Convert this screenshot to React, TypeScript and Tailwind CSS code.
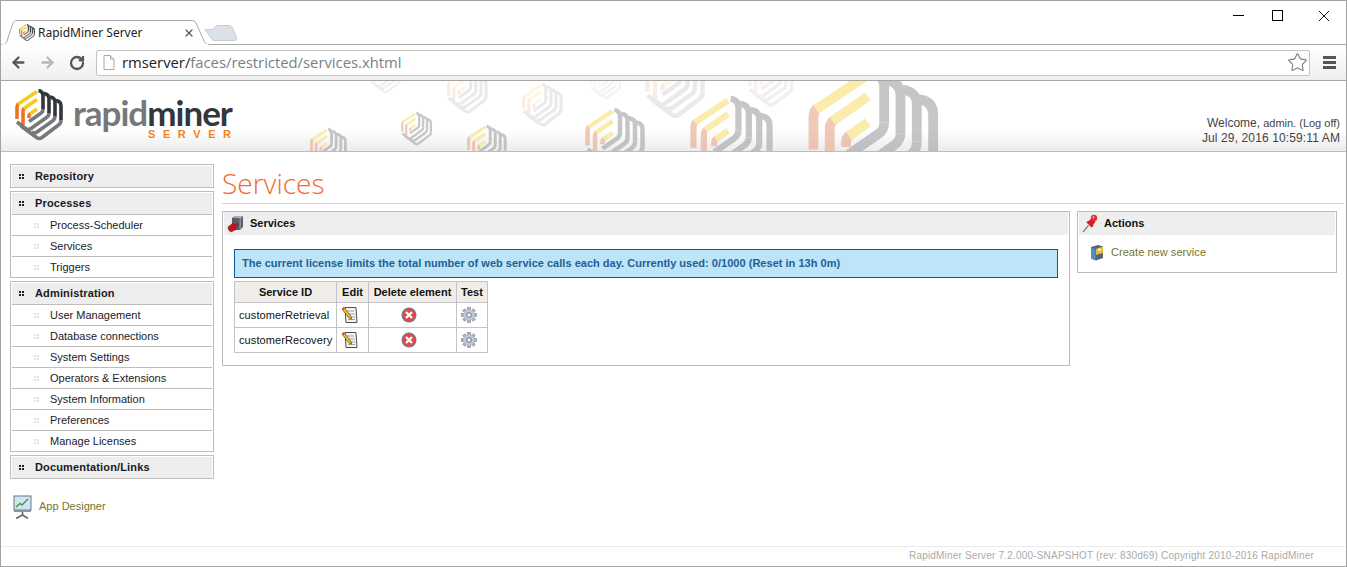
import { ArrowLeft, ArrowRight, RotateCw, Star, X } from "lucide-react";

const processItems = ["Process-Scheduler", "Services", "Triggers"];
const adminItems = [
  "User Management",
  "Database connections",
  "System Settings",
  "Operators & Extensions",
  "System Information",
  "Preferences",
  "Manage Licenses",
];
const services = ["customerRetrieval", "customerRecovery"];

// header watermark: x, y, scale, opacity
const watermarks = [
  [808, 68, 2.72, 0.62],
  [690, 96, 1.73, 0.62],
  [585, 108, 1.25, 0.62],
  [467, 125, 0.83, 0.62],
  [310, 128, 0.77, 0.62],
  [401, 112, 0.65, 0.6],
  [522, 83, 0.85, 0.22],
  [447, 70, 0.85, 0.22],
  [645, 54, 1.25, 0.22],
  [748, 58, 0.95, 0.16],
  [370, 60, 0.65, 0.16],
  [590, 66, 0.65, 0.12],
];

function MarkPaths({ yellow, orange, dark, gray }: { yellow: string; orange: string; dark: string; gray: string }) {
  const w = 3.6;
  return (
    <g fill="none" strokeWidth={w}>
      <g stroke={orange}>
        <path d="M2 30V18C2 16.5 2.5 15.5 3.5 14.5" />
        <path d="M8 36V22C8 21 8.5 20 9.5 19" />
        <path d="M14 29V27C14 26 14.5 25.2 15.5 24.5" />
      </g>
      <g stroke={yellow}>
        <path d="M3 15.2L22 2.5" />
        <path d="M9 19.5L22 10.5" />
        <path d="M15 25L22 20" />
      </g>
      <g stroke={dark}>
        <path d="M23.5 1.5C26.5 2 28 4 28 7V20" />
        <path d="M29 4.5C32.5 5 34 7 34 10V24" />
        <path d="M35 8C38.5 8.5 40 10.500 40 13V27" />
        <path d="M41 11.500C44.500 12 46 14 46 17V31" />
      </g>
      <g stroke={gray}>
        <path d="M28 20C28 22.500 27 23.500 25.500 24.500L14 32.500" />
        <path d="M34 24C34 26.500 33 27.500 31.500 28.500L16 39.500C14 41 12 40.500 10.500 39.500L2 33" />
        <path d="M40 27C40 30 39 31 37.500 32L22 43C20 44.500 18 44 16.500 43" />
        <path d="M46 31C46 34 45 35 43.500 36L27 48.500C25 50 23 49.500 21.500 48.500L6 37" />
      </g>
    </g>
  );
}

function HeaderWatermark() {
  return (
    <svg className="absolute inset-0 h-full w-full" viewBox="1 81 1345 70" preserveAspectRatio="none">
      {watermarks.map(([x, y, s, o], i) => (
        <g key={i} transform={`translate(${x} ${y}) scale(${s})`} opacity={o}>
          <MarkPaths yellow="#f9e27c" orange="#e9a98a" dark="#a2a4a6" gray="#a2a4a6" />
        </g>
      ))}
    </svg>
  );
}

function Dots({ light }: { light?: boolean }) {
  const c = light ? "bg-[#e0e0e0]" : "bg-[#222]";
  return (
    <span className="grid grid-cols-2 gap-[1px]">
      <i className={`h-[2px] w-[2px] ${c}`} />
      <i className={`h-[2px] w-[2px] ${c}`} />
      <i className={`h-[2px] w-[2px] ${c}`} />
      <i className={`h-[2px] w-[2px] ${c}`} />
    </span>
  );
}

function NavBox({ title, items = [] }: { title: string; items?: string[] }) {
  return (
    <div className="border border-[#c0bdb9] px-[1px] pt-[1px]">
      <div className="flex h-[21px] items-center bg-[#ededed] pl-[7px]">
        <Dots />
        <span className="ml-[11px] font-bold tracking-[0.15px] text-[#1a1a22]">{title}</span>
      </div>
      {items.map((item) => (
        <div key={item} className="flex h-[21px] items-center border-t border-[#c0bdb9] pl-[22px]">
          <Dots light />
          <span className="ml-[11px] text-[#1a1a2a]">{item}</span>
        </div>
      ))}
    </div>
  );
}

function EditIcon() {
  return (
    <svg width="17" height="18" viewBox="0 0 17 18">
      <path d="M4 1.500H15L16 16.500H5Z" fill="#f4f4e8" stroke="#44505c" />
      <path d="M6 5H13M6.500 8H13.500M7 11H14M7 13.500H14" stroke="#9aa4ae" />
      <path d="M1 3L3 1.500L10 10.500L10.500 13L8 12Z" fill="#f5c52a" stroke="#6b4d10" strokeWidth=".8" />
      <path d="M1 3L3 1.500L3.800 2.500L1.800 4Z" fill="#d8402f" />
    </svg>
  );
}

function DeleteIcon() {
  return (
    <svg width="16" height="16" viewBox="0 0 16 16">
      <circle cx="8" cy="8" r="7.500" fill="#77777c" />
      <circle cx="8" cy="8" r="6.300" fill="#dc4a4c" />
      <path d="M5 5L11 11M11 5L5 11" stroke="#fff" strokeWidth="2.300" />
    </svg>
  );
}

function GearIcon() {
  return (
    <svg width="16" height="16" viewBox="0 0 16 16">
      <g fill="#a9b3bf" stroke="#6b7684" strokeWidth=".5">
        {[0, 45, 90, 135, 180, 225, 270, 315].map((a) => (
          <rect key={a} x="6.500" y="0.500" width="3" height="4" transform={`rotate(${a} 8 8)`} />
        ))}
      </g>
      <circle cx="8" cy="8" r="5.300" fill="#c0c9d4" />
      <circle cx="8" cy="8" r="2.300" fill="#f4f6f8" stroke="#5d6876" strokeWidth=".9" />
    </svg>
  );
}

function ServicesIcon() {
  return (
    <svg width="17" height="18" viewBox="0 0 17 18">
      <path d="M5 3L8 1H16V12L13 15H5Z" fill="#5a6068" />
      <path d="M8 1H16L14 3H6Z" fill="#a8b0b8" />
      <path d="M12.500 3H14V14L12.500 15Z" fill="#8a9098" />
      <path d="M1 12L6 8L7 10L10 8L11 11L8 12.500L9 14.500L4 17L1.500 15Z" fill="#c4161c" stroke="#7c0d12" strokeWidth=".5" />
    </svg>
  );
}

function PinIcon() {
  return (
    <svg width="17" height="19" viewBox="0 0 17 19">
      <path d="M1 18L6.500 11.500" stroke="#7b8188" strokeWidth="1.200" />
      <path d="M9.500 3.500L13.500 7.500L11.500 10.500C11.500 12 10.500 13 9.500 13.500L4.500 8.500C5 7.500 6 6.800 7.500 6.500Z" fill="#d3202a" />
      <circle cx="12" cy="4" r="3.200" fill="#e2333a" />
      <circle cx="11.300" cy="3.200" r="1" fill="#f9a8a8" />
    </svg>
  );
}

function ServerIcon() {
  return (
    <svg width="14" height="17" viewBox="0 0 14 17">
      <path d="M1 3L8 1L13 2.500V14L6 16.500L1 14.500Z" fill="#5a6470" />
      <path d="M1 3.500L5.500 5V16L1 14.500Z" fill="#4f8fc8" />
      <path d="M6 5L13 2.500V9L6 11Z" fill="#e8b73e" />
      <circle cx="9.500" cy="5.500" r="1.500" fill="#fdf0b0" />
    </svg>
  );
}

function ChartIcon() {
  return (
    <svg width="19" height="24" viewBox="0 0 19 24">
      <rect x="1" y="1" width="17" height="14" fill="#cfe4f4" stroke="#6d7680" />
      <path d="M3 12L7 8.500L9 10L15 4" fill="none" stroke="#3f9a3a" strokeWidth="1.400" />
      <rect x="1" y="15" width="17" height="2" fill="#8c949c" />
      <path d="M9.500 17V20M9.500 20L3 23.500M9.500 20L15 23.500" stroke="#5d6670" strokeWidth="1.600" fill="none" />
    </svg>
  );
}

function Panel({ icon, title, titleClass, className, children }: { icon: React.ReactNode; title: string; titleClass: string; className: string; children: React.ReactNode }) {
  return (
    <div className={`border border-[#c0bdb9] px-[1px] ${className}`}>
      <div className="flex h-[23px] items-center bg-[#eeeeee] pl-[3px]">
        <span className="flex w-[17px] justify-center">{icon}</span>
        <span className={`font-bold text-[#111] ${titleClass}`}>{title}</span>
      </div>
      {children}
    </div>
  );
}

export default function App() {
  return (
    <div className="flex h-[567px] w-[1347px] flex-col overflow-hidden border border-[#a3a3a3] bg-white font-['Liberation_Sans',sans-serif] text-[11px]">
      {/* browser tab strip */}
      <div className="relative flex h-[44px] shrink-0 items-end border-b border-[#a9a9a9] bg-white">
        <svg className="absolute left-0 top-[18px]" width="240" height="27" viewBox="0 0 240 27">
          <path d="M204 10.500L211 10.500C213 10.500 214 6.500 217 6.500H228C230 6.500 231 8 232 10L235 17C236 19 236 21.500 233 21.500H212Z" fill="#dce0e7" stroke="#c8ccd2" />
          <path d="M0 25.500H2C4 25.500 5 24 6 22L12 4C13 2 14 1.500 16 1.500H190C192 1.500 194 2 195 4L203 22C204 24 205 25.500 208 25.500" fill="#fff" stroke="#a9a9a9" />
          <path d="M1 26H207" stroke="#fff" strokeWidth="2" />
        </svg>
        <div className="relative flex h-[24px] w-[200px] items-center pl-[18px] pt-[2px]">
          <svg width="16" height="18" viewBox="0 0 48 54" className="shrink-0">
            <MarkPaths yellow="#f8c91f" orange="#f0731f" dark="#3a3d42" gray="#7a7b7e" />
          </svg>
          <span className="ml-[3px] font-['Noto_Sans',sans-serif] text-[12px] text-[#222]">RapidMiner Server</span>
          <X className="absolute left-[182px] top-[7px] text-[#555]" size={12} strokeWidth={2.5} />
        </div>
        {/* window buttons */}
        <div className="absolute right-0 top-0 flex items-start">
          <span className="mr-[28px] mt-[14px] h-[1px] w-[11px] bg-black" />
          <span className="mr-[35px] mt-[9px] h-[11px] w-[11px] border border-black" />
          <svg className="mr-[16px] mt-[9px]" width="12" height="12" viewBox="0 0 12 12">
            <path d="M1 1L11 11M11 1L1 11" stroke="#111" />
          </svg>
        </div>
      </div>

      {/* browser toolbar */}
      <div className="flex h-[36px] shrink-0 items-center border-b border-[#a5a5a5] bg-gradient-to-b from-white to-[#efefef] pl-[9px] pr-[10px]">
        <ArrowLeft size={17} strokeWidth={3.200} className="text-[#555]" />
        <ArrowRight size={17} strokeWidth={3.200} className="ml-[12px] text-[#b8b8b8]" />
        <RotateCw size={16} strokeWidth={3.400} className="ml-[13px] text-[#555]" />
        <div className="ml-[11px] flex h-[26px] flex-1 items-center rounded-[2px] border border-[#c4c4c4] bg-white pl-[6px] pr-[1px] font-['Open_Sans',sans-serif] text-[14.8px]">
          <svg width="12" height="15" viewBox="0 0 12 15" className="shrink-0">
            <path d="M1 .500H7.500L11 4V14.500H1Z" fill="#fff" stroke="#a8a8a8" />
            <path d="M7.500 .500V4H11" fill="#eee" stroke="#a8a8a8" />
          </svg>
          <span className="ml-[7px] text-[#222]">rmserver/</span>
          <span className="text-[#7a7f86]">faces/restricted/services.xhtml</span>
          <Star size={21} strokeWidth={1.200} className="ml-auto text-[#777]" />
        </div>
        <div className="ml-[13px] flex w-[13px] flex-col gap-[2px]">
          <i className="h-[3px] bg-[#555]" />
          <i className="h-[3px] bg-[#555]" />
          <i className="h-[3px] bg-[#555]" />
        </div>
      </div>

      {/* app header */}
      <div className="relative flex h-[71px] shrink-0 border-b border-[#c0bdb9] bg-gradient-to-b from-white from-70% to-[#ececec]">
        <HeaderWatermark />
        <svg className="relative ml-[14px] mt-[8px] shrink-0" width="48" height="54" viewBox="0 0 48 54">
          <MarkPaths yellow="#f8c91f" orange="#f0731f" dark="#33363b" gray="#77787b" />
        </svg>
        <div className="relative ml-[10px] mt-[16px] flex flex-col">
          <div className="font-['Lato',sans-serif] text-[35px] font-bold leading-[30px] tracking-[-1px]">
            <span className="text-[#77787b]">rapid</span>
            <span className="text-[#33363b]">miner</span>
          </div>
          <div className="ml-[75px] mt-[3px] font-['Liberation_Sans',sans-serif] text-[11px] font-bold leading-[9px] tracking-[7.6px] text-[#f58220]">
            SERVER
          </div>
        </div>
        <div className="relative ml-auto mr-[6px] self-end pb-[5px] text-right text-[#444] leading-[15px]">
          <div>
            <span className="text-[12px]">Welcome,</span> admin. (Log off)
          </div>
          <div className="text-[12px] tracking-[0.12px]">Jul 29, 2016 10:59:11 AM</div>
        </div>
      </div>

      {/* page body */}
      <div className="flex min-h-0 flex-1">
        <aside className="ml-[9px] flex w-[204px] shrink-0 flex-col gap-[3px] pt-[12px]">
          <NavBox title="Repository" />
          <NavBox title="Processes" items={processItems} />
          <NavBox title="Administration" items={adminItems} />
          <NavBox title="Documentation/Links" />
          <div className="ml-[3px] mt-[13px] flex items-center">
            <ChartIcon />
            <span className="ml-[7px] mt-[-1px] text-[#75752f]">App Designer</span>
          </div>
        </aside>

        <main className="ml-[8px] flex-1 pr-[2px]">
          <h1 className="h-[52px] border-b border-[#d4d2ce] pt-[12px] font-['Open_Sans',sans-serif] text-[28px] font-light leading-[38px] text-[#f26a2e]">
            Services
          </h1>
          <div className="mt-[7px] flex items-start">
            <Panel icon={<ServicesIcon />} title="Services" titleClass="ml-[6px]" className="h-[155px] w-[848px]">
              <div className="pl-[10px] pt-[14px]">
                <div className="flex h-[29px] w-[824px] items-center border border-[#0c5a9c] bg-[#bde4f7] pl-[7px] font-bold tracking-[0.02px] text-[#1d5f96]">
                  The current license limits the total number of web service calls each day. Currently used: 0/1000 (Reset in 13h 0m)
                </div>
                <table className="mt-[3px] border-collapse text-[#111]">
                  <thead>
                    <tr className="h-[21px] bg-[#f1eeea]">
                      <th className="w-[102px] border border-[#c4c2c8] font-bold">Service ID</th>
                      <th className="w-[32px] border border-[#c4c2c8] font-bold">Edit</th>
                      <th className="w-[88px] border border-[#c4c2c8] font-bold">Delete element</th>
                      <th className="w-[31px] border border-[#c4c2c8] font-bold">Test</th>
                    </tr>
                  </thead>
                  <tbody>
                    {services.map((id) => (
                      <tr key={id} className="h-[25px]">
                        <td className="border border-[#c4c2c8] pl-[4px] tracking-[0.1px]">{id}</td>
                        <td className="border border-[#c4c2c8] pl-[4px]">
                          <EditIcon />
                        </td>
                        <td className="border border-[#c4c2c8]">
                          <div className="mr-[7px] flex justify-center"><DeleteIcon /></div>
                        </td>
                        <td className="border border-[#c4c2c8] pl-[4px]">
                          <GearIcon />
                        </td>
                      </tr>
                    ))}
                  </tbody>
                </table>
              </div>
            </Panel>
            <Panel icon={<PinIcon />} title="Actions" titleClass="ml-[5px]" className="ml-[7px] h-[62px] w-[260px]">
              <div className="flex items-center pl-[11px] pt-[9px]">
                <ServerIcon />
                <span className="ml-[7px] tracking-[0.05px] text-[#75752f]">Create new service</span>
              </div>
            </Panel>
          </div>
        </main>
      </div>

      {/* footer */}
      <div className="h-[20px] shrink-0 border-t border-[#ebebeb] pr-[32px] pt-[1px] text-right text-[10px] leading-[15px] tracking-[0.19px] text-[#aaa]">
        RapidMiner Server 7.2.000-SNAPSHOT (rev: 830d69) Copyright 2010-2016 RapidMiner
      </div>
    </div>
  );
}
